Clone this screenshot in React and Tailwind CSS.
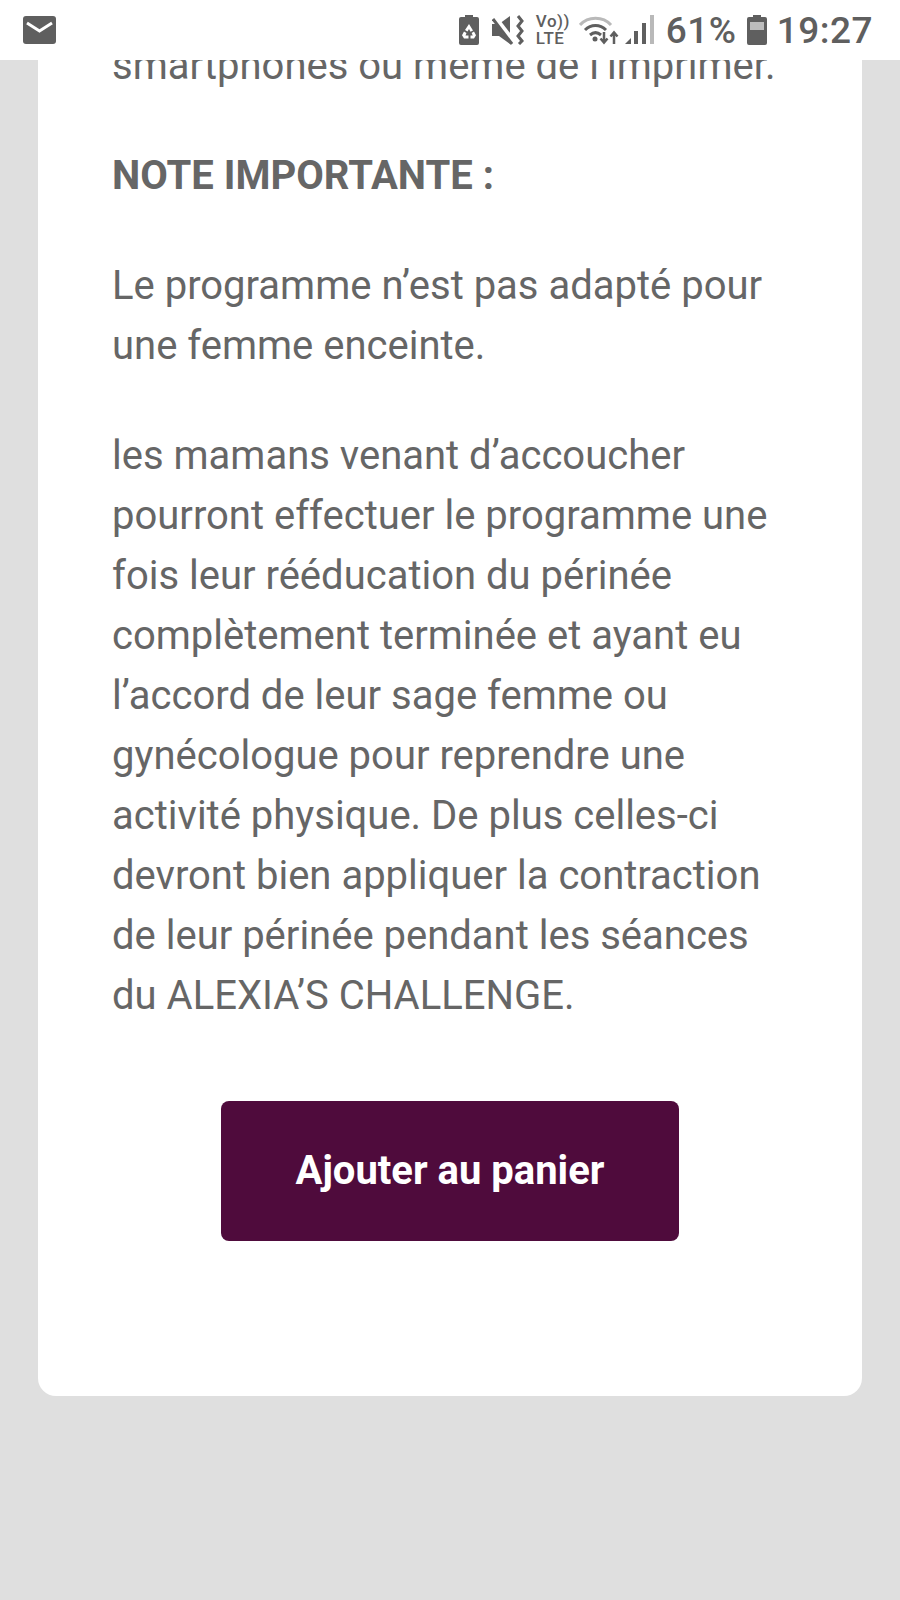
import React from 'react';

const RecycleBattery = () => (
  <svg width="20" height="30" viewBox="0 0 20 30" fill="#5f5f5f">
    <path d="M6 0h8v2h4a2 2 0 0 1 2 2v24a2 2 0 0 1-2 2H2a2 2 0 0 1-2-2V4a2 2 0 0 1 2-2h4z" />
    <path d="M10 9l4 6.500-2.500 1.200-1.500-2.700-1.500 2.500-2.500-1.400zM15 16.500l2 3.800-2 3.200h-3.500v-3h2.300l-1.200-2.500zM5 16.500l2.500 1.400-1 2.600h3v3H5l-2-3.200z" fill="#fff" />
  </svg>
);

const MuteIcon = () => (
  <svg width="32" height="30" viewBox="0 0 32 30">
    <path d="M0 9h7l11-8v28L7 21H0z" fill="#5f5f5f" />
    <path d="M2 2l20 26" stroke="#fff" strokeWidth="6" />
    <path d="M1 4l19 25" stroke="#5f5f5f" strokeWidth="3" />
    <path d="M26 1l4 5-4 5 4 5-4 5 4 5-3 3" stroke="#5f5f5f" strokeWidth="3" fill="none" />
  </svg>
);

const WifiIcon = () => (
  <svg width="40" height="30" viewBox="0 0 40 30" fill="none">
    <path d="M1 10C9 1 24 1 32 10" stroke="#b9b9b9" strokeWidth="3" />
    <path d="M6 15c6-6 15-6 21 0M11 20c3.500-3 7.500-3 11 0" stroke="#5f5f5f" strokeWidth="3" />
    <circle cx="16" cy="24" r="2.500" fill="#5f5f5f" />
    <path d="M25 17v10M21.500 23.500l3.500 4 3.500-4M35 29V18M31.500 21.500l3.500-4 3.500 4" stroke="#5f5f5f" strokeWidth="2.500" />
  </svg>
);

const SignalIcon = () => (
  <svg width="30" height="30" viewBox="0 0 30 30">
    <path d="M0 29l6-6v6z" fill="#5f5f5f" />
    <rect x="9" y="16" width="4" height="13" fill="#5f5f5f" />
    <rect x="17" y="8" width="4" height="21" fill="#5f5f5f" />
    <rect x="25" y="0" width="4" height="29" fill="#b9b9b9" />
  </svg>
);

const BatteryIcon = () => (
  <svg width="20" height="30" viewBox="0 0 20 30">
    <path d="M6 0h8v2h4a2 2 0 0 1 2 2v24a2 2 0 0 1-2 2H2a2 2 0 0 1-2-2V4a2 2 0 0 1 2-2h4z" fill="#5f5f5f" />
    <rect x="3" y="7" width="14" height="8" fill="#bdbdbd" />
  </svg>
);

const StatusBar = () => (
  <div className="h-[60px] bg-white flex items-center justify-between pl-[23px] pr-[27px] text-[#5f5f5f]">
    <svg width="33" height="29" viewBox="0 0 33 29">
      <rect width="33" height="28" rx="3" fill="#5f5f5f" />
      <path d="M4 7l12.500 8L29 7" stroke="#fff" strokeWidth="3" fill="none" />
    </svg>
    <div className="flex items-center">
      <div className="flex items-center mr-[13px]"><RecycleBattery /></div>
      <div className="mr-[12px]"><MuteIcon /></div>
      <div className="flex flex-col items-start w-[31px] mr-[12px] text-[17px] leading-[17px] font-medium tracking-[0.5px]">
        <span>Vo))</span>
        <span>LTE</span>
      </div>
      <div className="mr-[6px]"><WifiIcon /></div>
      <SignalIcon />
      <span className="ml-[11px] text-[37px] leading-none font-medium tracking-[0.5px]">61%</span>
      <div className="ml-[10px]"><BatteryIcon /></div>
      <span className="ml-[10px] text-[37px] leading-none font-medium tracking-[0.5px]">19:27</span>
    </div>
  </div>
);

export default function App() {
  return (
    <div className="h-[1600px] bg-[#dfdfdf] overflow-hidden font-['Roboto',sans-serif]">
      <StatusBar />
      <div className="h-[1540px] overflow-hidden">
        <div className="mx-[38px] -mt-[24px] bg-white rounded-b-[18px] pl-[74px] pr-[60px] pb-[155px] text-[40px] leading-[60px] text-[#666666]">
          <p className="whitespace-nowrap">smartphones ou même de l’imprimer.</p>
          <p className="mt-[50px] font-bold">NOTE IMPORTANTE :</p>
          <p className="mt-[50px]">Le programme n’est pas adapté pour<br />une femme enceinte.</p>
          <p className="mt-[50px]">
            les mamans venant d’accoucher<br />
            pourront effectuer le programme une<br />
            fois leur rééducation du périnée<br />
            complètement terminée et ayant eu<br />
            l’accord de leur sage femme ou<br />
            gynécologue pour reprendre une<br />
            activité physique. De plus celles-ci<br />
            devront bien appliquer la contraction<br />
            de leur périnée pendant les séances<br />
            du ALEXIA’S CHALLENGE.
          </p>
          <div className="mt-[75px] ml-[-74px] mr-[-60px] flex justify-center">
            <button className="w-[458px] h-[140px] rounded-[8px] bg-[#4f0b3c] text-white text-[40px] font-bold">
              Ajouter au panier
            </button>
          </div>
        </div>
      </div>
    </div>
  );
}
